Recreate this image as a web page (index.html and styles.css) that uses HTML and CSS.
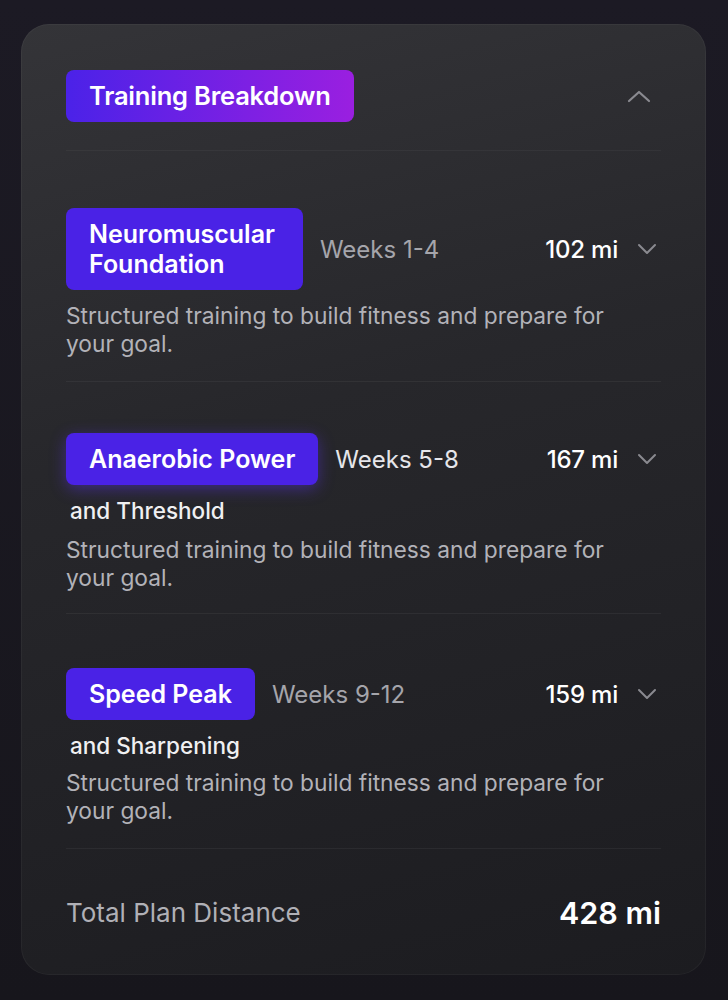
FILE: index.html
```html
<!DOCTYPE html>
<html>
<head>
<meta charset="utf-8">
<link rel="stylesheet" href="styles.css">
</head>
<body>
<div class="card">
  <div class="header">
    <div class="title-pill">Training Breakdown</div>
    <svg class="chev-up" width="24" height="14" viewBox="0 0 24 14"><path d="M2 12 L12 3 L22 12" fill="none" stroke="#8a8a90" stroke-width="2.2" stroke-linecap="round" stroke-linejoin="round"/></svg>
  </div>

  <div class="phase phase-1">
    <div class="row">
      <div class="pill">Neuromuscular<br>Foundation</div>
      <div class="weeks">Weeks 1-4</div>
      <div class="miles">102 mi</div>
      <svg class="chev" width="20" height="12" viewBox="0 0 20 12"><path d="M2 2 L10 10 L18 2" fill="none" stroke="#8a8a90" stroke-width="2" stroke-linecap="round" stroke-linejoin="round"/></svg>
    </div>
    <p class="desc">Structured training to build fitness and prepare for your goal.</p>
  </div>

  <div class="phase phase-2">
    <div class="row">
      <div class="pill glow">Anaerobic Power</div>
      <div class="weeks light">Weeks 5-8</div>
      <div class="miles">167 mi</div>
      <svg class="chev" width="20" height="12" viewBox="0 0 20 12"><path d="M2 2 L10 10 L18 2" fill="none" stroke="#8a8a90" stroke-width="2" stroke-linecap="round" stroke-linejoin="round"/></svg>
    </div>
    <div class="sub">and Threshold</div>
    <p class="desc">Structured training to build fitness and prepare for your goal.</p>
  </div>

  <div class="phase phase-3">
    <div class="row">
      <div class="pill">Speed Peak</div>
      <div class="weeks">Weeks 9-12</div>
      <div class="miles">159 mi</div>
      <svg class="chev" width="20" height="12" viewBox="0 0 20 12"><path d="M2 2 L10 10 L18 2" fill="none" stroke="#8a8a90" stroke-width="2" stroke-linecap="round" stroke-linejoin="round"/></svg>
    </div>
    <div class="sub">and Sharpening</div>
    <p class="desc">Structured training to build fitness and prepare for your goal.</p>
  </div>

  <div class="total">
    <div class="total-label">Total Plan Distance</div>
    <div class="total-value">428 mi</div>
  </div>
</div>
</body>
</html>
```

FILE: styles.css
```css
html, body {
  margin: 0;
  padding: 0;
}
body {
  width: 728px;
  height: 1000px;
  background: linear-gradient(180deg, #1c1a24 0%, #17161c 100%);
  font-family: Inter, "Noto Sans", sans-serif;
  color: #fff;
  padding: 24px 22px 25px 21px;
  box-sizing: border-box;
  overflow: hidden;
}
.card {
  height: 951px;
  box-sizing: border-box;
  border-radius: 28px;
  background: linear-gradient(165deg, #343438 0%, #27272b 40%, #1c1c20 100%);
  box-shadow: inset 0 0 0 1px rgba(255,255,255,0.04);
  padding: 46px 45px 0 45px;
  display: flex;
  flex-direction: column;
}
.header {
  display: flex;
  align-items: center;
  justify-content: space-between;
  padding-bottom: 28px;
  border-bottom: 1px solid rgba(255,255,255,0.04);
}
.title-pill {
  background: linear-gradient(90deg, #4b22e8 0%, #9a1fe0 100%);
  border-radius: 8px;
  height: 52px;
  line-height: 52px;
  padding: 0 23px;
  font-size: 25.5px;
  font-weight: 600;
  letter-spacing: -0.2px;
}
.chev-up {
  margin-right: 10px;
}
.phase {
  border-bottom: 1px solid rgba(255,255,255,0.05);
  padding-bottom: 23px;
}
.phase-1 { padding-top: 57px; }
.phase-2 { padding-top: 51px; padding-bottom: 21px; }
.phase-3 { padding-top: 54px; }
.row {
  display: flex;
  align-items: center;
}
.pill {
  background: #4a22e6;
  border-radius: 8px;
  padding: 11px 23px 11px 23px;
  font-size: 25px;
  font-weight: 600;
  line-height: 30px;
  letter-spacing: 0;
}
.phase-1 .pill {
  padding-right: 28px;
}
.pill.glow {
  box-shadow: 0 4px 16px rgba(90, 50, 240, 0.45);
}
.weeks {
  margin-left: 17px;
  font-size: 24px;
  color: #a5a5ab;
  flex: 1;
}
.weeks.light {
  color: #e6e6ea;
}
.miles {
  font-size: 24px;
  font-weight: 500;
  color: #fff;
  letter-spacing: -0.2px;
}
.chev {
  margin-left: 19px;
  margin-right: 4px;
}
.sub {
  margin: 13px 0 0 4px;
  font-size: 22.5px;
  font-weight: 500;
  color: #f0f0f2;
  line-height: 26px;
}
.desc {
  margin: 12px 0 0 0;
  font-size: 22.75px;
  line-height: 28px;
  color: #b2b2b8;
  width: 570px;
}
.phase-3 .desc { margin-top: 10px; }
.total {
  display: flex;
  justify-content: space-between;
  align-items: center;
  padding-top: 46px;
  line-height: 36px;
}
.total-label {
  font-size: 26px;
  color: #b0b0b6;
}
.total-value {
  font-size: 30.5px;
  font-weight: 600;
  color: #fff;
}
```
